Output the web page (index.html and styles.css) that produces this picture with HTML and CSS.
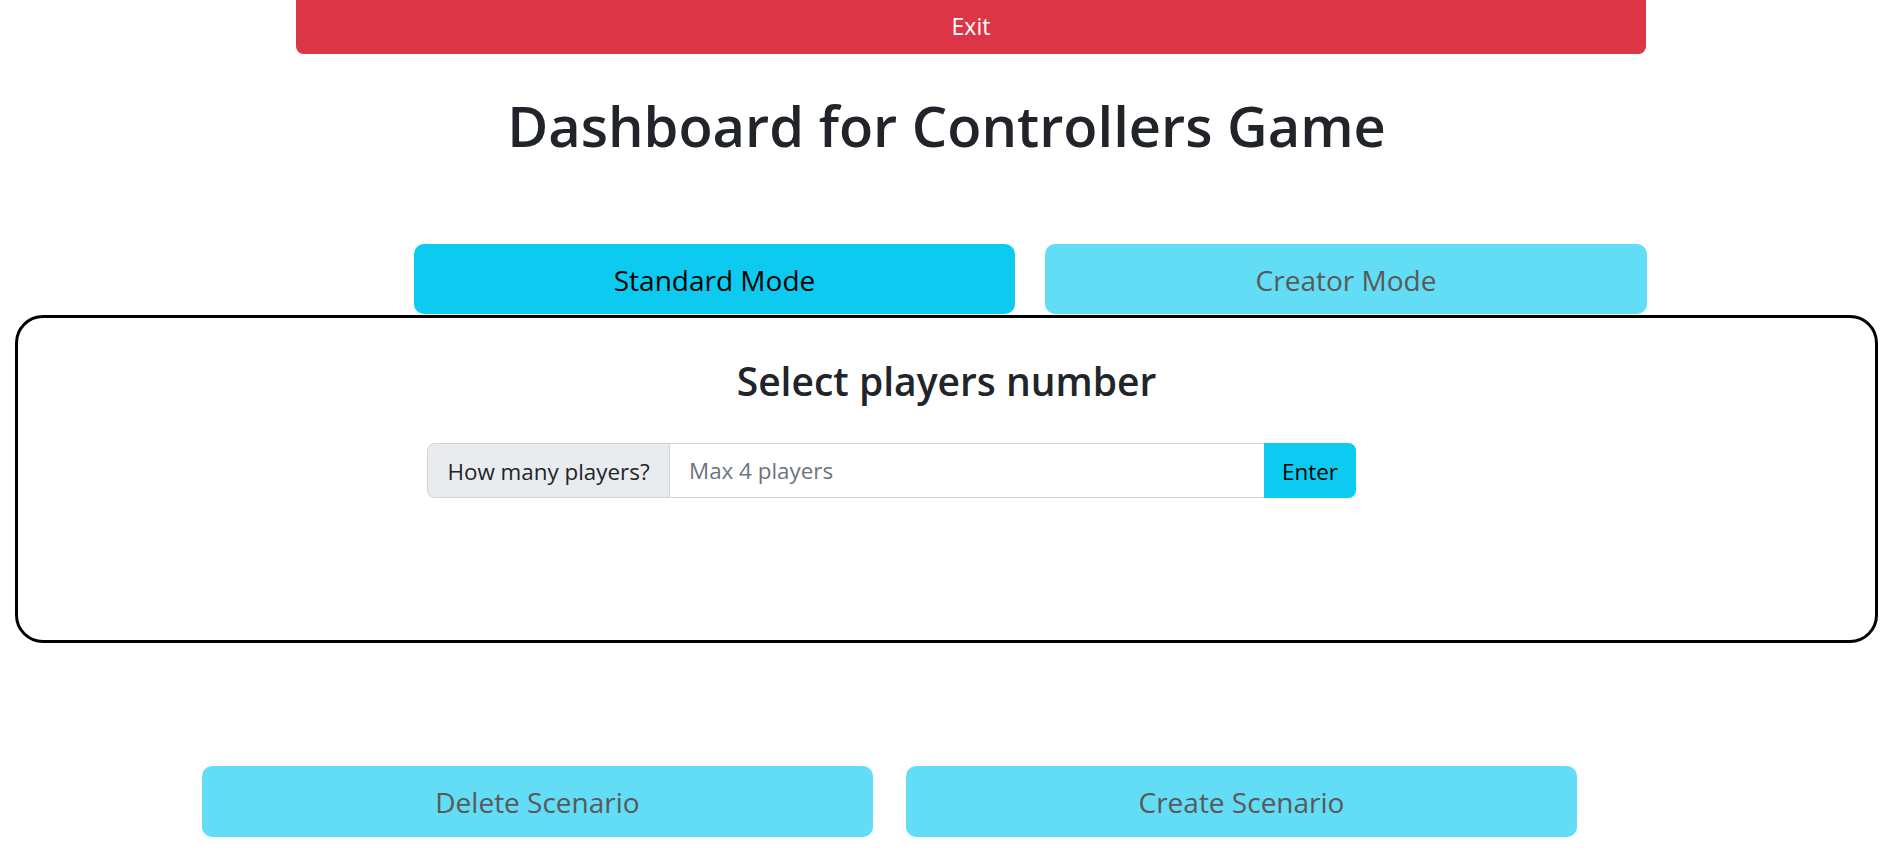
FILE: index.html
```html
<!DOCTYPE html>
<html lang="en">
<head>
<meta charset="utf-8">
<title>Dashboard for Controllers Game</title>
<link rel="stylesheet" href="styles.css">
</head>
<body>
  <div class="exit-row">
    <button class="btn btn-exit">Exit</button>
  </div>
  <h1 class="title">Dashboard for Controllers Game</h1>
  <div class="mode-row">
    <button class="btn btn-mode btn-active">Standard Mode</button>
    <button class="btn btn-mode btn-disabled">Creator Mode</button>
  </div>
  <section class="panel">
    <h2 class="panel-title">Select players number</h2>
    <div class="input-group">
      <span class="group-label">How many players?</span>
      <input class="group-input" type="text" placeholder="Max 4 players">
      <button class="btn group-btn">Enter</button>
    </div>
  </section>
  <div class="scenario-row">
    <button class="btn btn-scenario btn-disabled">Delete Scenario</button>
    <button class="btn btn-scenario btn-disabled">Create Scenario</button>
  </div>
</body>
</html>
```
FILE: styles.css
```css
* { box-sizing: border-box; }
html, body { margin: 0; padding: 0; background: #fff; }
body {
  font-family: "Open Sans", "Noto Sans", "DejaVu Sans", sans-serif;
  color: #212529;
  width: 1893px;
}
.btn {
  font-family: inherit;
  border: 0;
  cursor: pointer;
  display: block;
  text-align: center;
}
.exit-row { display: flex; padding-left: 296px; }
.btn-exit {
  width: 1350px;
  height: 54px;
  background: #dc3545;
  color: #fff;
  font-size: 23px;
  line-height: 34.5px;
  padding: 9px 0 10.5px;
  border-radius: 0 0 7.5px 7.5px;
}
.title {
  margin: 37.7px 0 0;
  text-align: center;
  font-size: 56px;
  line-height: 67.2px;
  font-weight: 600;
  color: #212529;
}
.mode-row {
  display: flex;
  gap: 30px;
  padding-left: 414px;
  margin-top: 85px;
}
.btn-mode {
  width: 601px;
  height: 70px;
  font-size: 28px;
  line-height: 42px;
  padding: 15px 0 13px;
  border-radius: 10px;
}
.btn-mode + .btn-mode { width: 602px; }
.btn-active { background: #0dcaf0; color: #000; }
.btn-disabled { background: #62ddf5; color: #595959; }
.panel {
  margin: 1px 15px 0;
  border: 3px solid #000;
  border-radius: 28px;
  height: 328px;
  display: flex;
  flex-direction: column;
  align-items: center;
}
.panel-title {
  margin: 40.5px 0 0;
  font-size: 39px;
  line-height: 46.8px;
  font-weight: 600;
  color: #212529;
}
.input-group {
  margin-top: 37.7px;
  align-self: flex-start;
  margin-left: 409px;
  display: flex;
  width: 929px;
  height: 55px;
}
.group-label {
  background: #e9ecef;
  border: 1px solid #ced4da;
  border-radius: 7.5px 0 0 7.5px;
  width: 243px;
  font-size: 22.4px;
  line-height: 33.6px;
  padding: 11px 0 8.4px;
  text-align: center;
  color: #212529;
}
.group-input {
  flex: 1;
  border: 1px solid #ced4da;
  border-left: 0;
  border-right: 0;
  font-family: inherit;
  font-size: 22.4px;
  padding: 0 0 0 19px;
  color: #212529;
  background: #fff;
  outline: none;
}
.group-input::placeholder { color: #6c757d; }
.group-btn {
  width: 92px;
  background: #0dcaf0;
  color: #000;
  font-size: 22.4px;
  line-height: 33.6px;
  padding: 11px 0 8.4px;
  border-radius: 0 7.5px 7.5px 0;
}
.scenario-row {
  display: flex;
  gap: 33px;
  padding-left: 202px;
  margin-top: 123px;
}
.btn-scenario {
  width: 671px;
  height: 71px;
  font-size: 28px;
  line-height: 42px;
  padding: 15px 0 14px;
  border-radius: 10px;
}
```
